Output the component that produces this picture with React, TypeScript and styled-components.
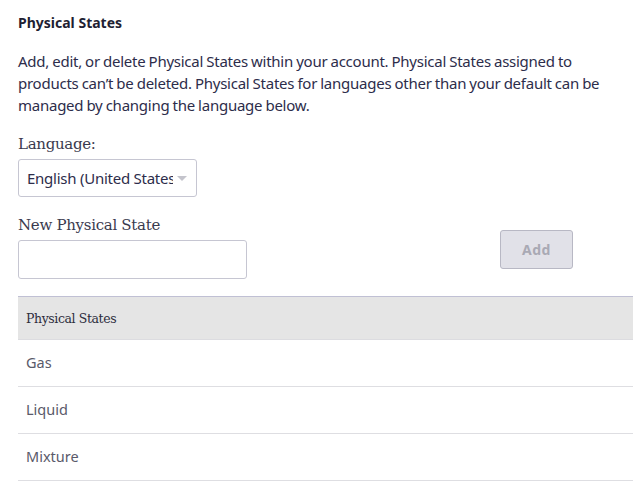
import * as React from 'react';
import styled, {createGlobalStyle} from 'styled-components';

const GlobalStyle = createGlobalStyle`
  html, body {
    overflow: hidden;
  }
  body {
    margin: 8px;
    background: #ffffff;
    font-family: "Noto Sans", "Open Sans", sans-serif;
    color: #2d2d4b;
  }
`;

const Page = styled.div`
  display: flex;
  flex-direction: column;
  width: 619px;
  padding: 0 0 0 10px;
  box-sizing: content-box;
`;

const Title = styled.h2`
  margin: 5px 0 0;
  font-size: 14px;
  font-weight: 700;
  line-height: 20px;
  color: #1f1f33;
`;

const Intro = styled.p`
  margin: 17px 0 0;
  font-size: 15px;
  line-height: 22px;
  letter-spacing: -0.25px;
  word-spacing: -0.5px;
  color: #2d2d4b;
  max-width: 600px;
`;

const Label = styled.label`
  display: block;
  font-family: "DejaVu Serif", "Liberation Serif", serif;
  font-size: 15px;
  line-height: 20px;
  color: #3a3a4e;
  letter-spacing: -0.3px;
`;

const Field = styled.div<{$top: number}>`
  margin-top: ${p => p.$top}px;
  display: flex;
  flex-direction: column;
  gap: 5px;
`;

const SelectBox = styled.div`
  display: flex;
  align-items: center;
  width: 179px;
  height: 38px;
  box-sizing: border-box;
  padding: 0 8px 0 8px;
  border: 1px solid #c6c6d2;
  border-radius: 3px;
  font-size: 15px;
  letter-spacing: -0.25px;
  color: #2d2d4b;
  overflow: hidden;
`;

const SelectText = styled.span`
  width: 146px;
  white-space: nowrap;
  overflow: hidden;
  text-overflow: clip;
`;

const Caret = styled.span`
  width: 0;
  height: 0;
  margin-left: 4px;
  border-left: 5px solid transparent;
  border-right: 5px solid transparent;
  border-top: 5px solid #c4c4cc;
`;

const AddRow = styled.div`
  display: flex;
  align-items: flex-end;
  justify-content: space-between;
  width: 555px;
  margin-top: 18px;
`;

const TextInput = styled.input`
  width: 229px;
  height: 39px;
  box-sizing: border-box;
  border: 1px solid #c6c6d2;
  border-radius: 3px;
  font-size: 15px;
  padding: 0 8px;
  outline: none;
`;

const AddButton = styled.button`
  width: 73px;
  height: 39px;
  margin-bottom: 10px;
  box-sizing: border-box;
  border: 1px solid #b8b8c4;
  border-radius: 3px;
  background: #e1e1e8;
  color: #a9a9b4;
  font-family: "Noto Sans", sans-serif;
  font-size: 14px;
  font-weight: 700;
  letter-spacing: 0.5px;
`;

const Table = styled.div`
  margin-top: 17px;
  display: flex;
  flex-direction: column;
`;

const HeaderRow = styled.div`
  height: 42px;
  display: flex;
  align-items: center;
  padding-left: 8px;
  background: #e5e5e5;
  border-top: 1px solid #c0c0d4;
  border-bottom: 1px solid #dcdce0;
  font-family: "DejaVu Serif", "Liberation Serif", serif;
  font-size: 12.5px;
  letter-spacing: -0.4px;
  color: #2d2d3d;
`;

const Row = styled.div`
  height: 47px;
  display: flex;
  align-items: center;
  padding-left: 8px;
  padding-bottom: 2px;
  box-sizing: border-box;
  border-bottom: 1px solid #dedee2;
  font-size: 14.5px;
  color: #5a5a6a;
`;

const states = ['Gas', 'Liquid', 'Mixture'];

export default function App() {
  return (
    <>
      <GlobalStyle />
      <Page>
        <Title>Physical States</Title>
        <Intro>
          Add, edit, or delete Physical States within your account. Physical States assigned to
          products can’t be deleted. Physical States for languages other than your default can be
          managed by changing the language below.
        </Intro>
        <Field $top={18}>
          <Label>Language:</Label>
          <SelectBox>
            <SelectText>English (United States)</SelectText>
            <Caret />
          </SelectBox>
        </Field>
        <AddRow>
          <Field $top={0}>
            <Label>New Physical State</Label>
            <TextInput type="text" />
          </Field>
          <AddButton disabled>Add</AddButton>
        </AddRow>
        <Table>
          <HeaderRow>Physical States</HeaderRow>
          {states.map(s => (
            <Row key={s}>{s}</Row>
          ))}
        </Table>
      </Page>
    </>
  );
}
